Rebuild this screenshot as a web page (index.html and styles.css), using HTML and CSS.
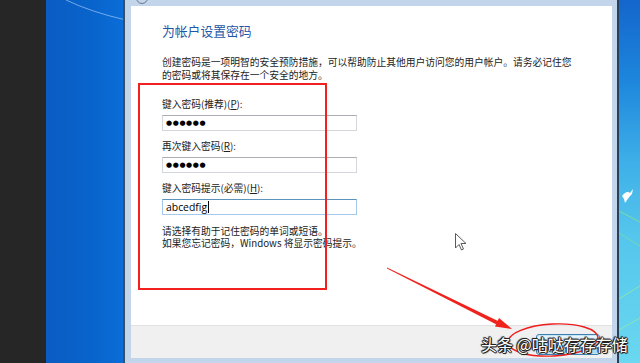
FILE: index.html
```html
<!DOCTYPE html>
<html lang="zh-CN">
<head>
    <meta charset="UTF-8">
    <title>为帐户设置密码</title>
    <link rel="stylesheet" href="styles.css">
</head>
<body>
    <div class="screen">
        <div class="side-dark"></div>

        <div class="desk desk-left">
            <svg class="desk-art" width="77" height="363" viewBox="0 0 77 363">
                <path d="M20 0 Q45 12 80 20" fill="none" stroke="rgba(200,225,255,0.55)" stroke-width="1"/>
            </svg>
        </div>

        <div class="window">
            <div class="client">
                <div class="content">
                    <h1 class="title">为帐户设置密码</h1>
                    <p class="intro">创建密码是一项明智的安全预防措施，可以帮助防止其他用户访问您的用户帐户。请务必记住您<br>的密码或将其保存在一个安全的地方。</p>

                    <div class="form">
                        <label class="label">键入密码(推荐)(<u>P</u>):</label>
                        <div class="field dots">●●●●●●</div>
                        <label class="label">再次键入密码(<u>R</u>):</label>
                        <div class="field dots">●●●●●●</div>
                        <label class="label">键入密码提示(必需)(<u>H</u>):</label>
                        <div class="field focused">abcedfig<span class="caret"></span></div>
                    </div>

                    <p class="hint">请选择有助于记住密码的单词或短语。<br>如果您忘记密码，Windows 将显示密码提示。</p>
                </div>
                <div class="footer">
                    <button class="next-button" aria-label="下一步"></button>
                </div>
            </div>
        </div>

        <div class="desk desk-right">
            <svg class="desk-art" width="21" height="363" viewBox="0 0 21 363">
                <path d="M-2 210 L21 222" stroke="rgba(150,230,120,0.7)" stroke-width="1"/>
                <path d="M-2 232 L21 246" stroke="rgba(150,230,120,0.5)" stroke-width="1"/>
                <path d="M-2 300 L21 286" stroke="rgba(170,240,140,0.6)" stroke-width="1"/>
                <path d="M0 330 L21 318" stroke="rgba(170,240,140,0.6)" stroke-width="1"/>
                <path d="M3 196 C6 192 9 191 11 193 L14 189 L13 194 C10 197 8 200 6 203 L5 199 Z" fill="#fff"/>
            </svg>
        </div>

        <!-- annotations drawn over the screenshot -->
        <svg class="top-knob" width="20" height="6" viewBox="0 0 20 6">
            <circle cx="10" cy="-2" r="5.5" fill="none" stroke="#6b7a8c" stroke-width="1"/>
        </svg>
        <div class="red-box"></div>
        <svg class="overlay" width="640" height="363" viewBox="0 0 640 363">
            <polygon points="387,267.5 498,321 496.5,324.5 387,268.5" fill="#f0231c"/>
            <polygon points="512,329 495,326.5 499,318" fill="#f0231c"/>
            <ellipse cx="553" cy="340" rx="45" ry="16" transform="rotate(-3 553 340)" fill="none" stroke="#ee1c1c" stroke-width="1.4"/>
            <path d="M455.5 233.5 L455.5 248 L459 244.5 L461.5 250 L463.5 249 L461 243.5 L466 243.5 Z" fill="#fff" stroke="#5a5a5a" stroke-width="1" stroke-linejoin="round"/>
        </svg>
        <div class="watermark">头条 @咕哒存存存储</div>
    </div>
</body>
</html>
```

FILE: styles.css
```css
/* Global settings */
*, *::before, *::after {
    box-sizing: border-box;
}

html,
body {
    margin: 0;
    padding: 0;
    width: 640px;
    height: 363px;
    overflow: hidden;
    background: #262626;
    font-family: "Noto Sans CJK SC", "Noto Sans", sans-serif;
}

.screen {
    position: relative;
    display: flex;
    width: 640px;
    height: 363px;
}

.side-dark {
    width: 46px;
    background: #262626;
}

.desk {
    position: relative;
    overflow: hidden;
}

.desk-art {
    display: block;
}

.desk-left {
    width: 77px;
    background: linear-gradient(90deg, #0a5cc2 0%, #0864cc 60%, #0b6dd8 100%);
}

.desk-right {
    width: 21px;
    background: linear-gradient(180deg, #1466cc 0%, #1d86dc 22%, #3fb0e8 45%, #55c6ec 65%, #6ad8f0 100%);
}

/* Window frame */
.window {
    width: 496px;
    padding: 6px 5px 5px 6px;
    background: #c2d5ea;
    border-left: 2px solid #3c4e62;
    border-right: 2px solid #2a4058;
}

.client {
    display: flex;
    flex-direction: column;
    height: 100%;
}

.content {
    flex: 1;
    background: #fff;
    padding: 17px 0 0 31px;
    color: #222;
    font-size: 9.75px;
}

.title {
    margin: 0;
    font-size: 12.8px;
    line-height: 16px;
    font-weight: normal;
    color: #1e57a8;
}

.intro {
    margin: 17px 0 0;
    line-height: 12.5px;
    white-space: nowrap;
}

.form {
    display: flex;
    flex-direction: column;
    align-items: flex-start;
    margin-top: 17px;
}

.label {
    line-height: 12px;
    margin-top: 9px;
}

.label:first-child {
    margin-top: 0;
}

.field {
    width: 195px;
    height: 16px;
    margin-top: 5px;
    padding: 0 3px;
    border: 1px solid #d3d6db;
    border-top-color: #abadb3;
    background: #fff;
    line-height: 14px;
    color: #000;
}

.dots {
    font-family: "DejaVu Sans", sans-serif;
    font-size: 7px;
    letter-spacing: 0.6px;
}

.focused {
    border-color: #a4c9ec;
    border-top-color: #5c93bc;
    font-family: "Open Sans", "Liberation Sans", sans-serif;
    font-size: 10.4px;
}

.caret {
    display: inline-block;
    width: 1px;
    height: 12px;
    margin-left: 1px;
    vertical-align: -2px;
    background: #000;
}

.hint {
    margin: 9.5px 0 0;
    line-height: 12.5px;
    white-space: nowrap;
}

/* Bottom command area */
.footer {
    display: flex;
    justify-content: flex-end;
    height: 33px;
    padding: 8px 12px 0 0;
    background: #f0f0f0;
    border-top: 1px solid #e2e2e2;
}

.next-button {
    width: 64px;
    height: 21px;
    padding: 0;
    border: 1px solid #3c7fb1;
    border-radius: 3px;
    background: linear-gradient(180deg, #eaf6fd 0%, #d9f0fc 50%, #bee6fd 51%, #a7d9f5 100%);
    box-shadow: inset 0 0 0 1px #c4e5f6;
}

/* Annotations */
.top-knob {
    position: absolute;
    left: 132px;
    top: 0;
}

.red-box {
    position: absolute;
    left: 138px;
    top: 83px;
    width: 189px;
    height: 207px;
    border: 2px solid #f32020;
}

.overlay {
    position: absolute;
    left: 0;
    top: 0;
    pointer-events: none;
}

.watermark {
    position: absolute;
    left: 481px;
    top: 333px;
    font-size: 16px;
    line-height: 22px;
    color: #fff;
    white-space: nowrap;
    text-shadow: 1px 0 0 #222, -1px 0 0 #222, 0 1px 0 #222, 0 -1px 0 #222, 1px 1px 1px #222, -1px -1px 1px #222;
}
```
